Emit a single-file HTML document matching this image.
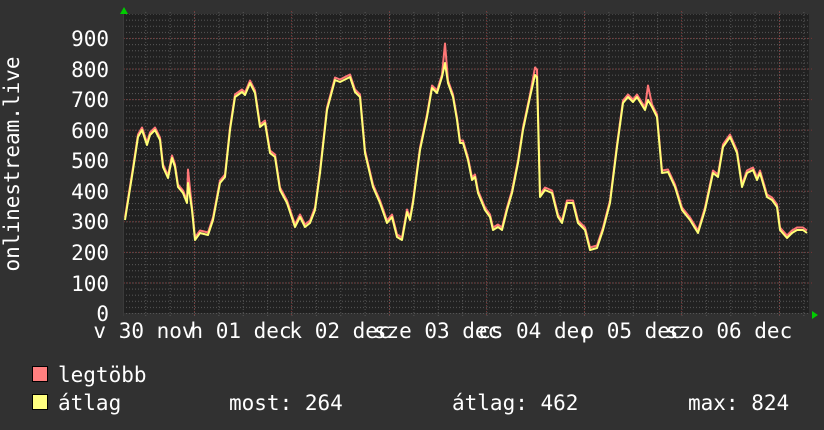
<!DOCTYPE html>
<html><head><meta charset="utf-8"><style>
html,body{margin:0;padding:0;background:#313131;}
svg{display:block}
text{font-family:"DejaVu Sans Mono","Liberation Mono",monospace;font-size:21px;fill:#fff;}
</style></head><body>
<svg width="824" height="430" viewBox="0 0 824 430" xmlns="http://www.w3.org/2000/svg">
<defs>
<pattern id="hmin" patternUnits="userSpaceOnUse" x="0" y="313" width="824" height="6.111">
<line x1="0" y1="0.5" x2="824" y2="0.5" stroke="#555" stroke-width="1" stroke-dasharray="1,2"/>
</pattern>
<pattern id="vmin" patternUnits="userSpaceOnUse" x="194" y="0" width="24.375" height="430">
<line x1="0.5" y1="0" x2="0.5" y2="430" stroke="#555" stroke-width="1" stroke-dasharray="1,2"/>
</pattern>
</defs>
<rect width="824" height="430" fill="#313131"/>
<rect x="124" y="14" width="685" height="299" fill="#212121"/>
<rect x="124" y="14" width="685" height="300" fill="url(#hmin)"/>
<rect x="124" y="10" width="686" height="306" fill="url(#vmin)"/>
<g stroke="#7a3535" stroke-width="1" stroke-dasharray="1,2">
<line x1="124" y1="283" x2="812" y2="283"/>
<line x1="124" y1="252.4" x2="812" y2="252.4"/>
<line x1="124" y1="221.8" x2="812" y2="221.8"/>
<line x1="124" y1="191.3" x2="812" y2="191.3"/>
<line x1="124" y1="160.7" x2="812" y2="160.7"/>
<line x1="124" y1="130.1" x2="812" y2="130.1"/>
<line x1="124" y1="99.6" x2="812" y2="99.6"/>
<line x1="124" y1="69" x2="812" y2="69"/>
<line x1="124" y1="38.4" x2="812" y2="38.4"/>
<line x1="194.5" y1="11" x2="194.5" y2="316"/>
<line x1="291.5" y1="11" x2="291.5" y2="316"/>
<line x1="389.5" y1="11" x2="389.5" y2="316"/>
<line x1="486.5" y1="11" x2="486.5" y2="316"/>
<line x1="584.5" y1="11" x2="584.5" y2="316"/>
<line x1="681.5" y1="11" x2="681.5" y2="316"/>
<line x1="779.5" y1="11" x2="779.5" y2="316"/>
</g>
<line x1="123.5" y1="12" x2="123.5" y2="316" stroke="#3a3a3a"/>
<polygon points="120,14 128,14 124,7" fill="#00cc00"/>
<polygon points="812,311 812,319 818,315" fill="#00cc00"/>

<g fill="none" stroke-linejoin="round" stroke-width="2">
<polyline stroke="#ff7777" transform="translate(0,-2.5)" points="125,220 133,170 138,137 142,130 147,145 150,135 155,130 160,140 163,167 168,178 172,158 175,167 178,187 183,193 187,203 188,172 192,210 195,240 200,233 208,235 213,220 220,183 225,177 230,130 235,97 242,92 245,95 250,83 255,93 260,127 265,123 270,153 275,157 280,190 287,203 295,227 300,217 305,227 310,223 315,210 320,173 327,110 335,80 340,82 350,77 355,92 360,97 365,153 373,187 380,203 387,223 392,217 397,237 402,240 407,212 410,220 413,203 420,150 427,117 432,88 437,93 442,77 445,46 448,83 453,97 457,120 460,143 463,143 468,160 472,180 475,177 478,193 485,210 490,217 493,230 498,227 502,230 507,210 512,193 518,163 523,130 530,97 535,70 537,72 540,197 545,190 552,193 558,217 562,223 567,203 573,203 578,223 585,230 590,250 597,248 603,230 610,203 617,147 623,103 628,97 633,102 637,97 645,110 648,88 652,107 657,117 662,173 668,172 675,187 682,210 690,220 698,233 705,210 713,173 718,177 723,147 730,137 737,153 742,187 747,173 753,170 757,180 760,173 767,197 772,200 777,207 780,230 787,238 792,233 797,230 803,230 807,233"/>
<polyline stroke="#ffff77" points="125,220 133,170 138,137 142,130 147,145 150,135 155,130 160,140 163,167 168,178 172,158 175,167 178,187 183,193 187,203 188,183 192,210 195,240 200,233 208,235 213,220 220,183 225,177 230,130 235,97 242,92 245,95 250,83 255,93 260,127 265,123 270,153 275,157 280,190 287,203 295,227 300,217 305,227 310,223 315,210 320,173 327,110 335,80 340,82 350,77 355,92 360,97 365,153 373,187 380,203 387,223 392,217 397,237 402,240 407,212 410,220 413,203 420,150 427,117 432,88 437,93 442,77 445,63 448,83 453,97 457,120 460,143 463,143 468,160 472,180 475,177 478,193 485,210 490,217 493,230 498,227 502,230 507,210 512,193 518,163 523,130 530,97 535,75 537,77 540,197 545,190 552,193 558,217 562,223 567,203 573,203 578,223 585,230 590,250 597,248 603,230 610,203 617,147 623,103 628,97 633,102 637,97 645,110 648,100 652,107 657,117 662,173 668,172 675,187 682,210 690,220 698,233 705,210 713,173 718,177 723,147 730,137 737,153 742,187 747,173 753,170 757,180 760,173 767,197 772,200 777,207 780,230 787,238 792,233 797,230 803,230 807,233"/>
</g>

<g text-anchor="end">
<text x="109" y="46">900</text>
<text x="109" y="77">800</text>
<text x="109" y="107">700</text>
<text x="109" y="138">600</text>
<text x="109" y="168">500</text>
<text x="109" y="199">400</text>
<text x="109" y="229">300</text>
<text x="109" y="260">200</text>
<text x="109" y="291">100</text>
<text x="109" y="321">0</text>
</g>
<text transform="translate(19,164) rotate(-90)" text-anchor="middle">onlinestream.live</text>
<g text-anchor="middle">
<text x="144" y="338">v 30 nov</text>
<text x="241" y="338">h 01 dec</text>
<text x="340" y="338">k 02 dec</text>
<text x="437" y="338">sze 03 dec</text>
<text x="535" y="338">cs 04 dec</text>
<text x="632" y="338">p 05 dec</text>
<text x="729" y="338">szo 06 dec</text>
</g>
<rect x="32.5" y="366.5" width="15" height="15" fill="#ff7f7f" stroke="#000"/>
<rect x="32.5" y="394.5" width="15" height="15" fill="#ffff7f" stroke="#000"/>
<text x="58" y="382">legtöbb</text>
<text x="58" y="410">átlag</text>
<text x="229" y="410">most: 264</text>
<text x="452" y="410">átlag: 462</text>
<text x="688" y="410">max: 824</text>
</svg>
</body></html>
